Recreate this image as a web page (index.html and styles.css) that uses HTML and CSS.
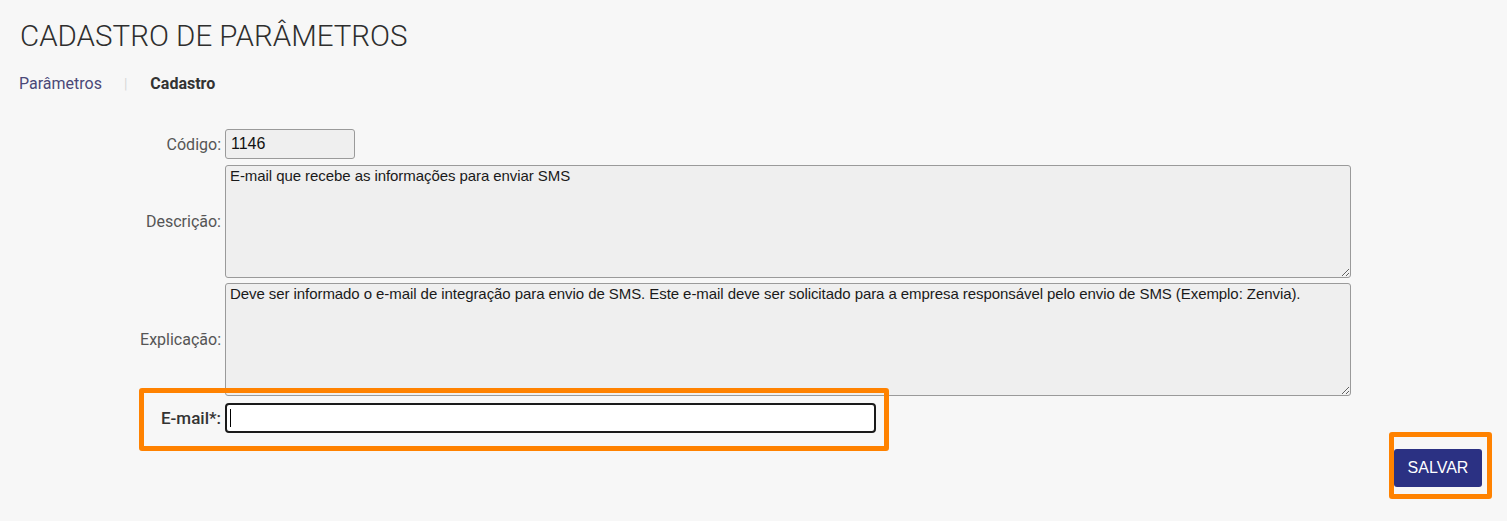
FILE: index.html
```html
<!DOCTYPE html>
<html lang="pt-BR">
<head>
<meta charset="utf-8">
<title>Cadastro de Parâmetros</title>
<link rel="stylesheet" href="styles.css">
</head>
<body>
<div class="page">
  <h1 class="title">CADASTRO DE PARÂMETROS</h1>
  <nav class="crumbs">
    <a class="crumb-link" href="#">Parâmetros</a>
    <span class="crumb-sep">|</span>
    <span class="crumb-current">Cadastro</span>
  </nav>
  <form class="form">
    <label class="lbl lbl-code" for="codigo">Código:</label>
    <div class="field"><input id="codigo" class="inp inp-code" type="text" value="1146" readonly></div>

    <label class="lbl" for="descricao">Descrição:</label>
    <div class="field"><textarea id="descricao" class="ta" readonly>E-mail que recebe as informações para enviar SMS</textarea></div>

    <label class="lbl" for="explicacao">Explicação:</label>
    <div class="field"><textarea id="explicacao" class="ta" readonly>Deve ser informado o e-mail de integração para envio de SMS. Este e-mail deve ser solicitado para a empresa responsável pelo envio de SMS (Exemplo: Zenvia).</textarea></div>

    <div class="email-row">
      <label class="lbl lbl-email" for="email">E-mail*:</label>
      <div class="field"><input id="email" class="inp inp-email" type="text" value=""><span class="caret"></span></div>
      <span class="highlight highlight-row"></span>
    </div>
  </form>
  <div class="actions">
    <div class="btn-wrap">
      <button class="btn" type="button">SALVAR</button>
      <span class="highlight highlight-btn"></span>
    </div>
  </div>
</div>
</body>
</html>
```
FILE: styles.css
```css
* { box-sizing: border-box; }
body {
  margin: 0;
  background: #f7f7f7;
  font-family: Roboto, "Liberation Sans", Arial, sans-serif;
  color: #333;
}
.page {
  padding: 18px 25px 34px 20px;
}
.title {
  margin: 0;
  font-weight: 300;
  font-size: 29.5px;
  line-height: 36px;
  color: #2e2e2e;
}
.crumbs {
  display: flex;
  align-items: center;
  margin-top: 20px;
  font-size: 16px;
  line-height: 20px;
  height: 20px;
}
.crumb-link {
  color: #4a4878;
  text-decoration: none;
  margin-left: -1px;
}
.crumb-sep {
  color: #d8d8d8;
  margin: 0 23px 0 22px;
  font-size: 14px;
}
.crumb-current {
  font-weight: 700;
  color: #333;
}
.form {
  display: grid;
  grid-template-columns: 201px 1126px;
  column-gap: 4px;
  row-gap: 5px;
  margin-top: 35px;
}
.lbl {
  display: flex;
  align-items: center;
  justify-content: flex-end;
  font-size: 16px;
  color: #555;
}
.field {
  position: relative;
  display: flex;
}
.inp {
  font-family: "Liberation Sans", Arial, sans-serif;
  font-size: 16px;
  color: #111;
  height: 30px;
  padding: 0 5px;
  outline: none;
}
.inp-code {
  width: 130px;
  background: #efefef;
  border: 1px solid #9a9a9a;
  border-radius: 3px;
  margin-bottom: 1px;
}
.ta {
  width: 1126px;
  height: 113px;
  background: #efefef;
  border: 1px solid #9a9a9a;
  border-radius: 3px;
  font-family: "Liberation Sans", Arial, sans-serif;
  font-size: 15px;
  letter-spacing: -0.07px;
  line-height: 17px;
  color: #1a1a1a;
  padding: 1px 4px;
  resize: vertical;
  outline: none;
}
.email-row {
  position: relative;
  grid-column: 1 / 3;
  display: grid;
  grid-template-columns: 201px 651px;
  column-gap: 4px;
  margin-top: 2px;
}
.lbl-email {
  font-size: 17px;
  font-weight: 500;
  color: #333;
}
.inp-email {
  width: 651px;
  background: #fff;
  border: 2px solid #1a1a1a;
  border-radius: 4px;
}
.caret {
  position: absolute;
  left: 5px;
  top: 6px;
  width: 1px;
  height: 18px;
  background: #000;
}
.highlight {
  position: absolute;
  border: 5px solid #ff8200;
  border-radius: 3px;
  pointer-events: none;
}
.highlight-row {
  left: 119px;
  top: -15px;
  width: 750px;
  height: 63px;
}
.actions {
  display: flex;
  justify-content: flex-end;
  margin-top: 16px;
}
.btn-wrap {
  position: relative;
}
.btn {
  display: block;
  width: 88px;
  height: 38px;
  background: #2b3183;
  color: #fff;
  border: none;
  border-radius: 3px;
  font-family: "Liberation Sans", Arial, sans-serif;
  font-size: 16px;
  padding: 0;
}
.highlight-btn {
  left: -5px;
  top: -17px;
  width: 103px;
  height: 67px;
}
```
